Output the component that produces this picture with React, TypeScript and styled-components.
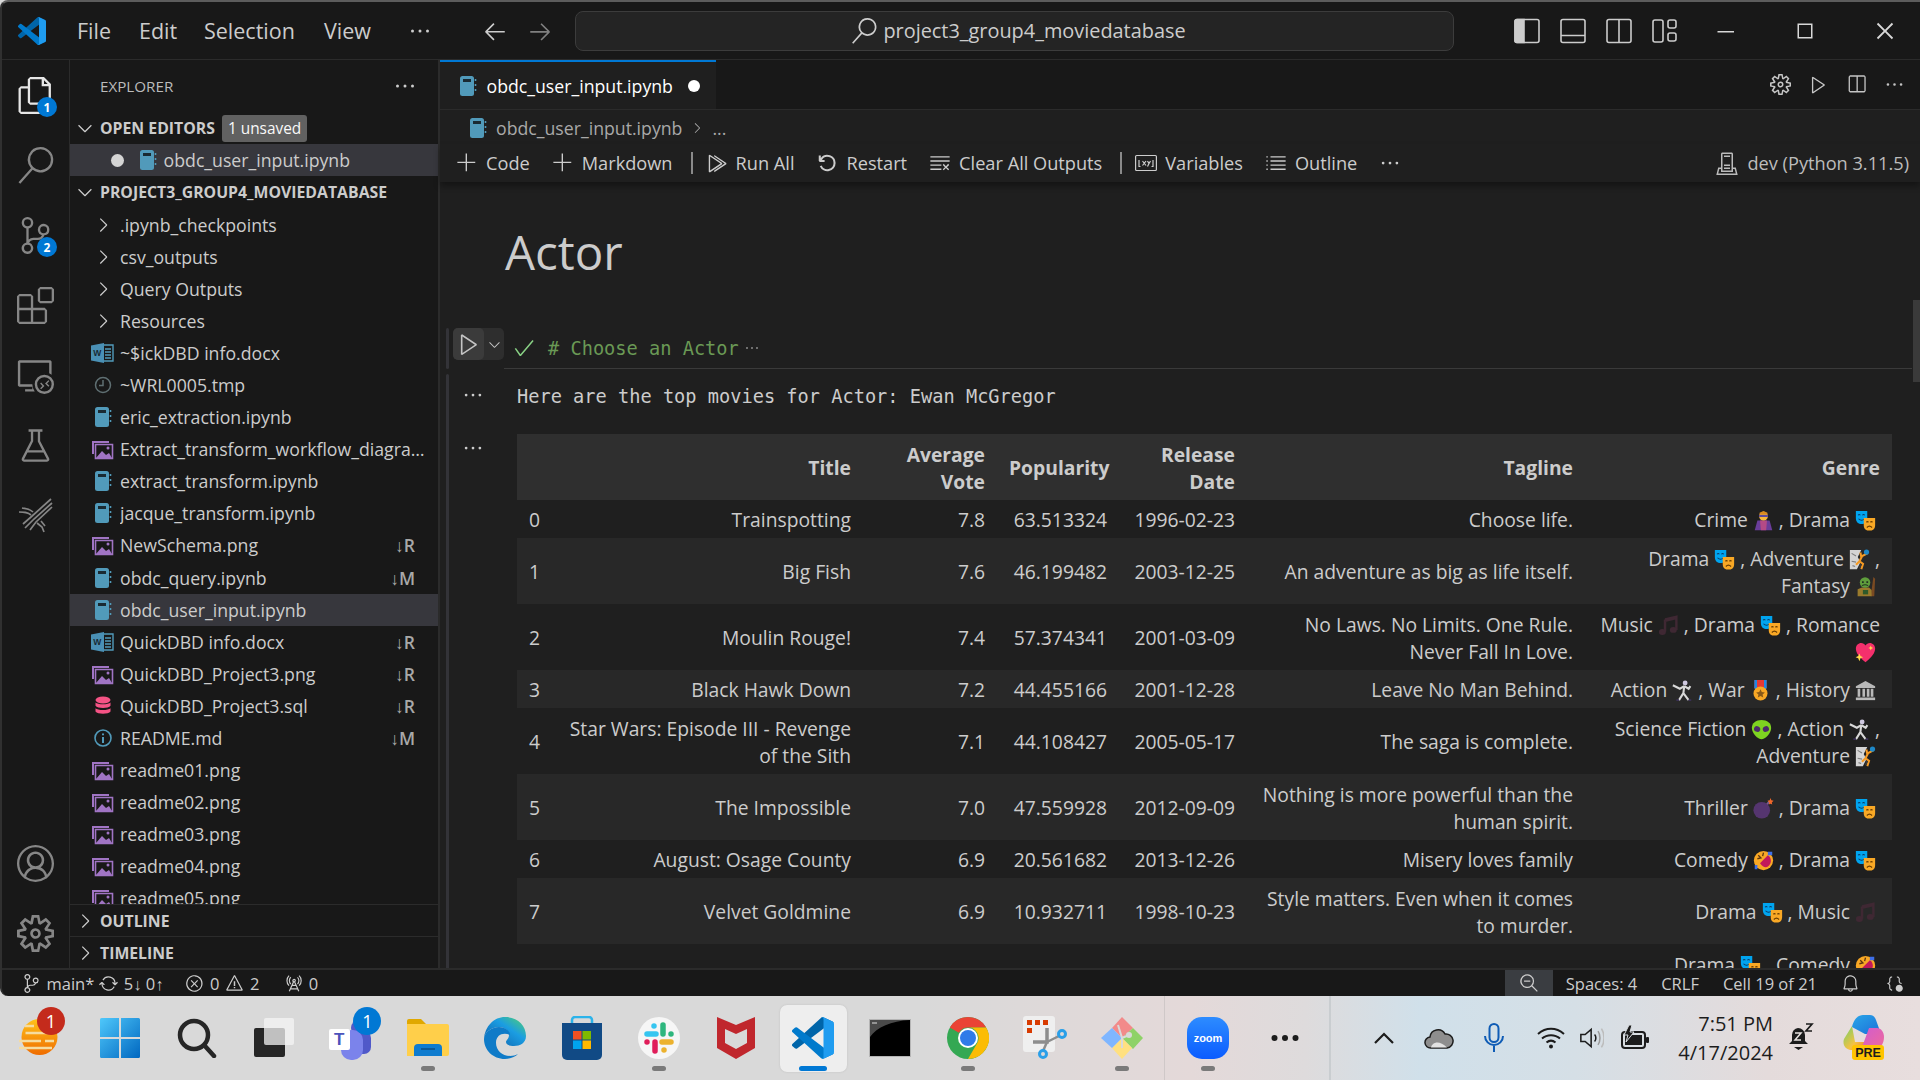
import React from 'react'
import styled, { createGlobalStyle } from 'styled-components'
import {
  VscFiles, VscSearch, VscSourceControl, VscExtensions, VscRemoteExplorer, VscBeaker, VscAccount,
  VscSettingsGear, VscEllipsis, VscChevronDown, VscChevronRight, VscAdd, VscRunAll, VscDebugRestart,
  VscClearAll, VscListUnordered, VscServerEnvironment, VscSync, VscError, VscWarning, VscRadioTower,
  VscZoomOut, VscBell, VscBracketDot, VscSplitHorizontal, VscCheck, VscArrowLeft, VscArrowRight,
  VscChromeMinimize, VscChromeMaximize, VscChromeClose, VscPlay,
} from 'react-icons/vsc'

const UI = '"Open Sans", "Noto Sans", sans-serif'
const MONO = '"DejaVu Sans Mono", "Liberation Mono", monospace'

const GlobalStyle = createGlobalStyle`
  html, body { margin: 0; padding: 0; background: #d9d9d9; }
  * { box-sizing: border-box; }
  body { font-family: ${UI}; font-size: 17.7px; color: #cccccc; }
`

const Screen = styled.div`
  width: 1920px;
  height: 1080px;
  display: flex;
  flex-direction: column;
  overflow: hidden;
`
const Window = styled.div`
  height: 996px;
  flex: none;
  display: flex;
  flex-direction: column;
  background: #181818;
  border-top: 2px solid #5c5c5c;
  border-left: 2px solid #303030;
  border-radius: 8px 0 0 8px;
  overflow: hidden;
`

/* title bar */
const TitleBar = styled.div`
  height: 58px;
  flex: none;
  display: flex;
  align-items: center;
  border-bottom: 1px solid #2b2b2b;
  position: relative;
`
const LogoSlot = styled.div`
  width: 75px;
  flex: none;
  padding-left: 16px;
  display: flex;
  align-items: center;
`
const MenuItem = styled.span<{ $w: number }>`
  width: ${p => p.$w}px;
  flex: none;
  font-size: 21.5px;
  color: #cccccc;
`
const MenuDots = styled.div`
  width: 74px;
  flex: none;
  display: flex;
  font-size: 24px;
  color: #cccccc;
  margin-left: 4px;
`
const NavIcon = styled.div<{ $dim?: boolean }>`
  width: 45px;
  flex: none;
  display: flex;
  font-size: 26px;
  color: ${p => (p.$dim ? '#808080' : '#cccccc')};
`
const CommandCenter = styled.div`
  width: 879px;
  height: 40px;
  flex: none;
  margin-left: 3px;
  border: 1px solid #3c3c3c;
  border-radius: 8px;
  background: #242424;
  display: flex;
  align-items: center;
  justify-content: center;
  gap: 6px;
  font-size: 19.9px;
  color: #cccccc;
  padding-left: 8px;
`
const LayoutIcons = styled.div`
  margin-left: 60px;
  flex: none;
  display: flex;
  gap: 20px;
  svg { display: block; }
`
const WinButtons = styled.div`
  margin-left: 7px;
  flex: none;
  display: flex;
  color: #d8d8d8;
`
const WinButton = styled.div`
  width: 80px;
  flex: none;
  display: flex;
  justify-content: center;
  font-size: 24px;
`

/* workbench */
const Workbench = styled.div`
  flex: 1;
  min-height: 0;
  display: flex;
`
const ActivityBar = styled.div`
  width: 68px;
  flex: none;
  display: flex;
  flex-direction: column;
  justify-content: space-between;
  border-right: 1px solid #2b2b2b;
`
const ActivityGroup = styled.div`
  display: flex;
  flex-direction: column;
`
const ActivitySlot = styled.div<{ $active?: boolean }>`
  position: relative;
  height: 70px;
  display: flex;
  align-items: center;
  justify-content: center;
  font-size: 37px;
  color: ${p => (p.$active ? '#e6e6e6' : '#868686')};
`
const CountBadge = styled.span`
  position: absolute;
  left: 35px;
  bottom: 13px;
  width: 20px;
  height: 20px;
  border-radius: 50%;
  background: #0078d4;
  color: #fff;
  font-size: 12px;
  font-weight: 700;
  display: flex;
  align-items: center;
  justify-content: center;
`

const SideBar = styled.div`
  width: 370px;
  flex: none;
  display: flex;
  flex-direction: column;
  border-right: 2px solid #2b2b2b;
`
const SideHead = styled.div`
  height: 52px;
  flex: none;
  display: flex;
  align-items: center;
  justify-content: space-between;
  padding: 0 21px 0 30px;
  font-size: 15.2px;
  color: #bbbbbb;
  svg { font-size: 24px; color: #cccccc; }
`
const SectionRow = styled.div<{ $line?: boolean }>`
  height: 32px;
  flex: none;
  display: flex;
  align-items: center;
  gap: 4px;
  padding-left: 4px;
  font-size: 15.8px;
  font-weight: 700;
  color: #cccccc;
  border-top: ${p => (p.$line ? '1px solid #2b2b2b' : 'none')};
  svg { font-size: 22px; flex: none; }
`
const Unsaved = styled.span`
  margin-left: 3px;
  height: 27px;
  padding: 0 6px;
  border-radius: 3px;
  background: #616161;
  color: #f8f8f8;
  font-size: 15.4px;
  font-weight: 400;
  display: flex;
  align-items: center;
`
const OpenEditor = styled.div`
  height: 32px;
  flex: none;
  display: flex;
  align-items: center;
  background: #37373d;
  padding-left: 41px;
`
const Dot = styled.span`
  width: 13px;
  height: 13px;
  border-radius: 50%;
  background: #d4d4d4;
  margin-right: 13px;
`
const Tree = styled.div`
  flex: 1;
  min-height: 0;
  overflow: hidden;
  padding-top: 1px;
`
const TreeRow = styled.div<{ $selected?: boolean }>`
  height: 32.05px;
  display: flex;
  align-items: center;
  padding: 0 12px 0 0;
  background: ${p => (p.$selected ? '#37373d' : 'transparent')};
`
const IconCell = styled.span`
  width: 50px;
  flex: none;
  display: flex;
  justify-content: flex-end;
  padding-right: 6px;
  font-size: 22px;
  color: #cccccc;
`
const FileName = styled.span`
  flex: 1;
  min-width: 0;
  white-space: nowrap;
  overflow: hidden;
  text-overflow: ellipsis;
  color: #cccccc;
`
const GitMark = styled.span`
  font-size: 17.5px;
  font-weight: 600;
  color: #a8a8a8;
  margin-right: 11px;
`

/* editor */
const Editor = styled.div`
  flex: 1;
  min-width: 0;
  display: flex;
  flex-direction: column;
  background: #1f1f1f;
`
const TabBar = styled.div`
  height: 50px;
  flex: none;
  display: flex;
  justify-content: space-between;
  background: #181818;
  border-bottom: 1px solid #2b2b2b;
`
const Tab = styled.div`
  width: 276px;
  display: flex;
  align-items: center;
  padding-left: 17px;
  gap: 7.5px;
  background: #1f1f1f;
  border-top: 2px solid #0078d4;
  color: #ffffff;
`
const TabDot = styled.span`
  width: 12px;
  height: 12px;
  border-radius: 50%;
  background: #ffffff;
  margin-left: 7.5px;
`
const EditorActions = styled.div`
  display: flex;
  align-items: center;
  gap: 17px;
  padding-right: 15px;
  font-size: 21px;
  color: #c5c5c5;
  svg { display: block; }
`
const Breadcrumb = styled.div`
  height: 34px;
  flex: none;
  display: flex;
  align-items: center;
  gap: 7px;
  padding: 1px 0 0 27px;
  color: #a9a9a9;
`
const NbToolbar = styled.div`
  height: 38px;
  flex: none;
  display: flex;
  align-items: center;
  padding-left: 16px;
  font-size: 18.2px;
  box-shadow: 0 4px 6px rgba(0, 0, 0, 0.35);
  position: relative;
  z-index: 1;
`
const ToolItem = styled.div`
  display: flex;
  align-items: center;
  gap: 8px;
  margin-right: 22px;
  color: #cccccc;
  svg { font-size: 22px; flex: none; }
`
const ToolDivider = styled.span`
  width: 2px;
  height: 22px;
  background: #8a8a8a;
  margin: 0 13px 0 -4px;
`
const Kernel = styled.div`
  margin-left: auto;
  display: flex;
  align-items: center;
  gap: 8px;
  padding-right: 11px;
  color: #bcbcbc;
  svg { font-size: 24px; }
`

/* notebook */
const Notebook = styled.div`
  flex: 1;
  min-height: 0;
  overflow: hidden;
  position: relative;
`
const ScrollThumb = styled.div`
  position: absolute;
  right: 0;
  top: 118px;
  width: 7px;
  height: 82px;
  background: #3a3a3a;
`
const Heading = styled.h1`
  height: 146px;
  margin: 0;
  padding: 36px 0 0 65px;
  font-size: 47.5px;
  font-weight: 400;
  line-height: 68px;
  color: #cccccc;
`
const CodeCell = styled.div`
  display: flex;
  height: 41px;
  padding-left: 6px;
`
const CellBar = styled.span`
  width: 3px;
  flex: none;
  background: #333338;
  border-radius: 2px;
`
const RunGroup = styled.div`
  width: 51px;
  height: 32px;
  margin-left: 4px;
  flex: none;
  display: flex;
  background: #2e2e2e;
  border-radius: 5px;
`
const RunMain = styled.div`
  width: 31px;
  display: flex;
  align-items: center;
  justify-content: center;
  background: #3b3b3b;
  border-radius: 5px;
  font-size: 26px;
  color: #c5c5c5;
`
const RunMore = styled.div`
  flex: 1;
  display: flex;
  align-items: center;
  justify-content: center;
  font-size: 17px;
  color: #c5c5c5;
`
const CodeLine = styled.div`
  flex: 1;
  display: flex;
  align-items: center;
  border-bottom: 1px solid #3a3a3a;
  margin-right: 8px;
  padding: 0 0 0 8px;
  svg { font-size: 24px; color: #89d185; flex: none; }
`
const Comment = styled.span`
  font-family: ${MONO};
  font-size: 18.65px;
  color: #6a9955;
  margin-left: 12px;
`
const Folded = styled.span`
  margin-left: 5px;
  color: #8a8a8a;
  display: flex;
  svg { font-size: 16px; color: #8a8a8a; }
`
const OutputCell = styled.div`
  display: flex;
  margin-top: 5px;
  padding-left: 6px;
  height: 620px;
`
const OutputColumn = styled.div`
  flex: 1;
  min-width: 0;
`
const OutputRow = styled.div`
  display: flex;
`
const Gutter = styled.div<{ $top: number }>`
  width: 68px;
  flex: none;
  padding: ${p => p.$top}px 0 0 13px;
  font-size: 22px;
  color: #cccccc;
  svg { display: block; }
`
const StreamText = styled.div`
  font-family: ${MONO};
  font-size: 18.65px;
  line-height: 28px;
  color: #cccccc;
  padding-top: 9px;
  margin-bottom: 23px;
`
const Table = styled.table`
  width: 1375px;
  table-layout: fixed;
  border-collapse: collapse;
  text-align: right;
  font-size: 19.3px;
  line-height: 27px;
  th { background: #2f2f2f; font-weight: 700; height: 66px; padding: 1px 12px 0; color: #cccccc; }
  td { padding: 1px 12px 0; color: #cccccc; white-space: nowrap; }
  svg { vertical-align: -4px; }
`
const BodyRow = styled.tr<{ $tall: boolean; $odd: boolean }>`
  height: ${p => (p.$tall ? 66 : 38)}px;
  background: ${p => (p.$odd ? '#282828' : 'transparent')};
`
const IndexCell = styled.td`
  text-align: left;
`
const LineEnd = styled.span`
  display: inline-block;
  width: 4px;
`

/* status bar */
const StatusBar = styled.div`
  height: 28px;
  flex: none;
  display: flex;
  align-items: center;
  padding: 0 16px 0 20px;
  border-top: 2px solid #2b2b2b;
  font-size: 16.5px;
  color: #cccccc;
  white-space: nowrap;
`
const StatusItem = styled.div<{ $left?: number }>`
  display: flex;
  align-items: center;
  gap: 5.5px;
  height: 100%;
  flex: none;
  margin-left: ${p => p.$left ?? 0}px;
  svg { font-size: 19px; flex: none; }
`
const ZoomBox = styled.div`
  margin-left: auto;
  width: 48px;
  height: 100%;
  flex: none;
  background: #3a3d41;
  display: flex;
  align-items: center;
  justify-content: center;
  font-size: 20px;
`

/* task bar */
const TaskBar = styled.div`
  height: 84px;
  flex: none;
  display: flex;
  background: linear-gradient(90deg, #d9d9d9 0, #d9d9d9 48%, #e4d9d9 62%, #dedbdc 68%, #d0e0ea 74%, #d5dfe6 82%, #e4dbdb 92%, #e8dede 100%);
`
const TaskSlot = styled.div<{ $w?: number; $active?: boolean }>`
  position: relative;
  width: ${p => p.$w ?? 77.1}px;
  flex: none;
  display: flex;
  align-items: center;
  justify-content: center;
  height: 84px;
  svg { display: block; position: relative; }
  &::before {
    content: ${p => (p.$active ? '""' : 'none')};
    position: absolute;
    left: 5px;
    right: 5px;
    top: 9px;
    height: 67px;
    border-radius: 7px;
    background: #eeeeee;
    box-shadow: 0 0 2px #bdbdbd;
  }
`
const RunPill = styled.span<{ $active?: boolean }>`
  position: absolute;
  top: 70px;
  left: 50%;
  transform: translateX(-50%);
  width: ${p => (p.$active ? 28 : 14)}px;
  height: 5px;
  border-radius: 3px;
  background: ${p => (p.$active ? '#0078d4' : '#7a7a7a')};
`
const TaskBadge = styled.span<{ $blue?: boolean; $right: number }>`
  position: absolute;
  top: 11px;
  right: ${p => p.$right}px;
  width: 28px;
  height: 28px;
  border-radius: 50%;
  background: ${p => (p.$blue ? '#0078d4' : '#c42b1c')};
  color: #fff;
  font-size: 18px;
  display: flex;
  align-items: center;
  justify-content: center;
`
const TaskSeparator = styled.span`
  width: 1px;
  flex: none;
  margin: 0 4px 0 4px;
  background: #cfc8c8;
`
const Tray = styled.div`
  margin-left: auto;
  width: 591px;
  flex: none;
  display: flex;
  border-left: 2px solid #c9cdd0;
  padding-left: 25px;
`
const Clock = styled.div`
  width: 114px;
  flex: none;
  display: flex;
  flex-direction: column;
  justify-content: center;
  align-items: flex-end;
  padding-right: 7px;
  font-size: 20px;
  line-height: 29px;
  color: #1c1c1c;
  white-space: nowrap;
`

/* small drawn file icons */
const NotebookIcon = () => (
  <svg width="22" height="22" viewBox="0 0 22 22">
    <rect x="3" y="1" width="14" height="20" rx="2.5" fill="#519aba" />
    <rect x="6" y="4" width="8" height="3" fill="#1a2a32" />
    <path d="M18.5 4v2M18.5 9v2M18.5 14v2" stroke="#519aba" strokeWidth="1.6" />
  </svg>
)
const ImageIcon = () => (
  <svg width="24" height="22" viewBox="0 0 24 22">
    <path d="M2 3h17v2H4v11H2Z" fill="#a074c4" />
    <path d="M5.500 6.500h17v14h-17Z" fill="#181818" stroke="#a074c4" strokeWidth="1.600" />
    <path d="M6 20l6-7 4 4 3-2 3 5Z" fill="#a074c4" />
    <circle cx="18" cy="10" r="1.500" fill="#a074c4" />
  </svg>
)
const WordIcon = () => (
  <svg width="24" height="22" viewBox="0 0 24 22">
    <path d="M12 3h11v16H12Z" fill="#181818" stroke="#519aba" strokeWidth="1.400" />
    <path d="M15 7h6M15 10h6M15 13h6M15 16h6" stroke="#519aba" strokeWidth="1.400" />
    <path d="M1 3.500 14 1v20L1 18.500Z" fill="#4a90b5" />
    <text x="3.200" y="14" fontSize="8.500" fontWeight="700" fontFamily="Liberation Sans" fill="#182a33">W</text>
  </svg>
)
const ClockIcon = () => (
  <svg width="22" height="22" viewBox="0 0 22 22" fill="none" stroke="#5f6f72" strokeWidth="1.500">
    <circle cx="11" cy="11" r="7.500" />
    <path d="M11 6v5.500H7" />
  </svg>
)
const DbIcon = () => (
  <svg width="22" height="22" viewBox="0 0 22 22" fill="#f55385">
    <ellipse cx="11" cy="5" rx="7.500" ry="3.500" />
    <path d="M3.500 7.500c2 2.400 13 2.400 15 0v3.300c-2 3-13 3-15 0ZM3.500 13.200c2 2.400 13 2.400 15 0v3.300c-2 3-13 3-15 0Z" />
  </svg>
)
const InfoIcon = () => (
  <svg width="22" height="22" viewBox="0 0 22 22" fill="none" stroke="#519aba" strokeWidth="1.600">
    <circle cx="11" cy="11" r="8" />
    <path d="M11 10v6M11 6.500v1.800" strokeWidth="2" />
  </svg>
)
const fileIcons = {
  nb: NotebookIcon, img: ImageIcon, word: WordIcon, tmp: ClockIcon, sql: DbIcon, info: InfoIcon,
}

const WaveIcon = () => (
  <svg width="37" height="37" viewBox="0 0 37 37" fill="none" stroke="#868686" strokeWidth="1.700">
    <path d="M34 2 14 20l-8 7" />
    <path d="M35 6 17 22 8 31" />
    <path d="M35 10 19 25l-6 8" />
    <path d="M2 15c5 0 8 0 12 3M5 11c5 1 8 1 11 4M20 26l5 4 2 5M24 24l4 5" />
  </svg>
)

/* layout toggles in the title bar */
const LayoutLeft = () => (
  <svg width="26" height="26" viewBox="0 0 26 26" fill="none" stroke="#cccccc" strokeWidth="1.600">
    <rect x="1" y="1.500" width="24" height="23" rx="2" />
    <path d="M1 3.500a2 2 0 0 1 2-2h7v23H3a2 2 0 0 1-2-2Z" fill="#cccccc" />
  </svg>
)
const LayoutPanel = () => (
  <svg width="26" height="26" viewBox="0 0 26 26" fill="none" stroke="#cccccc" strokeWidth="1.600">
    <rect x="1" y="1.500" width="24" height="23" rx="2" />
    <path d="M1 17.500h24" />
  </svg>
)
const LayoutRight = () => (
  <svg width="26" height="26" viewBox="0 0 26 26" fill="none" stroke="#cccccc" strokeWidth="1.600">
    <rect x="1" y="1.500" width="24" height="23" rx="2" />
    <path d="M13 1.500v23" />
  </svg>
)
const LayoutCustom = () => (
  <svg width="26" height="26" viewBox="0 0 26 26" fill="none" stroke="#cccccc" strokeWidth="1.600">
    <rect x="1" y="2" width="10" height="22" rx="2" />
    <rect x="16" y="2" width="8" height="8" rx="2" />
    <rect x="16" y="15" width="8" height="8" rx="2" />
  </svg>
)
const VariablesIcon = () => (
  <svg width="22" height="22" viewBox="0 0 22 22" fill="none" stroke="#cccccc" strokeWidth="1.200">
    <rect x="0.600" y="3.500" width="20.800" height="15" rx="1" />
    <path d="M4 8v6.500h1.500M18 8v6.500h-1.500M7.500 9l3.500 4.500M11 9l-3.500 4.500M12.500 9l1.500 2.500L15.500 9M14 11.500l-1.500 3" />
  </svg>
)
const VsCodeLogo = ({ size }: { size: number }) => (
  <svg width={size} height={size} viewBox="0 0 100 100">
    <path fill="#0065a9" d="M96.500 10.800 75.900.9a6.200 6.200 0 0 0-7.100 1.200L1.400 63.500a4.200 4.200 0 0 0 0 6.200l5.500 5a4.200 4.200 0 0 0 5.300.2L93.400 13.400c2.700-2 6.600-.1 6.600 3.300v-.2a6.200 6.200 0 0 0-3.500-5.700Z" />
    <path fill="#007acc" d="M96.500 89.200 75.900 99.100a6.200 6.200 0 0 1-7.100-1.200L1.400 36.500a4.200 4.200 0 0 1 0-6.200l5.500-5a4.200 4.200 0 0 1 5.300-.2l81.200 61.500c2.700 2 6.600.1 6.600-3.300v.2a6.200 6.200 0 0 1-3.500 5.700Z" />
    <path fill="#1f9cf0" d="M75.900 99.100a6.200 6.200 0 0 1-7.100-1.200c2.300 2.300 6.200.7 6.200-2.600V4.700c0-3.300-3.900-4.900-6.200-2.600a6.200 6.200 0 0 1 7.100-1.200l20.600 9.900a6.200 6.200 0 0 1 3.500 5.600v67.200a6.200 6.200 0 0 1-3.500 5.600Z" />
  </svg>
)

/* genre emoji */
const Emoji = ({ children }: { children: React.ReactNode }) => (
  <svg width="21" height="21" viewBox="0 0 24 24">{children}</svg>
)
const Masks = () => (
  <Emoji>
    <path d="M1 1h13v8c0 5-3 7-6.500 7S1 14 1 9Z" fill="#00a4ef" />
    <path d="M3.500 6q1.300-1.500 2.600 0M8.500 6q1.300-1.500 2.600 0M4 10q3.500 3.500 7 0" stroke="#0a3a66" strokeWidth="1.200" fill="none" />
    <path d="M10 9h13v8c0 5-3 6.500-6.500 6.500S10 22 10 17Z" fill="#f9a825" />
    <path d="M13 14q1.200-1.200 2.400 0M17.600 14q1.200-1.200 2.400 0M13.500 20q3-3 6 0" stroke="#6b3d00" strokeWidth="1.300" fill="none" />
  </Emoji>
)
const Villain = () => (
  <Emoji>
    <path d="M2 23 5 12h14l3 11Z" fill="#6a3d9a" />
    <path d="M8 12h8l-1 11H9Z" fill="#b44a86" />
    <circle cx="12" cy="7" r="5" fill="#f7b73a" />
    <path d="M7 5.500h10v2.500H7Z" fill="#5c4a9c" />
    <path d="M7.500 3 12 1l4.500 2v2h-9Z" fill="#d98a1f" />
  </Emoji>
)
const Climber = () => (
  <Emoji>
    <path d="M1 1h13l-4 8 3 6-4 8H1Z" fill="#d4d4d4" />
    <path d="M3 5l5 3M3 14l5 1M4 19l3 1" stroke="#7f7f7f" strokeWidth="1.300" />
    <path d="M21 5l-6 3-3 6 4 3-2 6M14 9l-1-5M12 14l-4 4" stroke="#f59a23" strokeWidth="2.400" fill="none" />
    <path d="M14 17l-2 5" stroke="#3a3a3a" strokeWidth="2" />
    <circle cx="20" cy="3.500" r="3" fill="#1e88c7" />
  </Emoji>
)
const Troll = () => (
  <Emoji>
    <path d="M18 23 21 1l2 2-1 20Z" fill="#7a4a22" />
    <path d="M3 23V15l5-2h8l3 3v7Z" fill="#9a7b2c" />
    <rect x="9" y="16" width="6" height="5" fill="#2f5a2a" />
    <circle cx="11.500" cy="7.500" r="6" fill="#5f9e3c" />
    <path d="M8 7h2M13 7h2" stroke="#232" strokeWidth="1.800" />
    <path d="M8 11q3.500-2 7 0" stroke="#232" strokeWidth="1.300" fill="none" />
  </Emoji>
)
const Notes = () => (
  <Emoji>
    <path d="M8 5 21 2v15M8 5v14M8 6.500l13-3" stroke="#3f2833" strokeWidth="2.800" fill="none" />
    <ellipse cx="5" cy="19.500" rx="4" ry="3.400" fill="#3f2833" />
    <ellipse cx="17.500" cy="17" rx="4" ry="3.400" fill="#3f2833" />
  </Emoji>
)
const Heart = () => (
  <Emoji>
    <path d="M12 23C4 17 1 12 1 7.500 1 3.500 4 1 7 1c2 0 4 1 5 3 1-2 3-3 5-3 3 0 6 2.500 6 6.500C23 12 20 17 12 23Z" fill="#f4306c" />
    <path d="M5 13l1.300 3 3 1.300-3 1.300L5 22l-1.300-3.400-3-1.300 3-1.300ZM18 4l.8 2 2 .8-2 .8-.8 2-.8-2-2-.8 2-.8Z" fill="#ffd84d" />
  </Emoji>
)
const Fencer = () => (
  <Emoji>
    <circle cx="15" cy="3.500" r="2.800" fill="#cfc9e0" />
    <path d="M14 7l-5 3-8-4M14 7l5 3 2-3M14 7l-1 8-5 8M13 15l6 8" stroke="#d8d8d8" strokeWidth="2.400" fill="none" />
    <path d="M8 23h-3M19 23h3" stroke="#3a2f55" strokeWidth="2" />
  </Emoji>
)
const Medal = () => (
  <Emoji>
    <path d="M5 0h14v9l-7 4-7-4Z" fill="#e53935" />
    <path d="M5 0h3v10H5ZM16 0h3v10h-3Z" fill="#1e88e5" />
    <circle cx="12" cy="15.500" r="8" fill="#f9a825" />
    <path d="M12 10.500l1.500 3.300 3.500.4-2.600 2.300.7 3.500-3.100-1.800-3.100 1.800.7-3.500L7 14.200l3.500-.4Z" fill="#8a5a18" />
  </Emoji>
)
const Temple = () => (
  <Emoji>
    <path d="M12 1 23 7v2H1V7Z" fill="#b8b8b8" />
    <path d="M3 10h3v9H3ZM8.500 10h3v9h-3ZM13.500 10h3v9h-3ZM18 10h3v9h-3Z" fill="#b8b8b8" />
    <path d="M1 20h22v3H1Z" fill="#b8b8b8" />
  </Emoji>
)
const Alien = () => (
  <Emoji>
    <path d="M12 1c6.500 0 11 3.500 11 9 0 7-7 13-11 13S1 17 1 10c0-5.500 4.500-9 11-9Z" fill="#7ed321" />
    <ellipse cx="7" cy="11.500" rx="3.600" ry="3.200" fill="#4a2a6a" transform="rotate(25 7 11.500)" />
    <ellipse cx="17" cy="11.500" rx="3.600" ry="3.200" fill="#4a2a6a" transform="rotate(-25 17 11.500)" />
  </Emoji>
)
const Bomb = () => (
  <Emoji>
    <circle cx="10" cy="14" r="9.500" fill="#55356f" />
    <path d="M16 7l3-3" stroke="#7a5c8f" strokeWidth="2.400" />
    <path d="M20 0l1 2.500L23.500 3 21.500 5l.5 2.500L20 6.500 18 7.500l.5-2.500L16.500 3l2.500-.5Z" fill="#f0682a" />
  </Emoji>
)
const Rofl = () => (
  <Emoji>
    <circle cx="12" cy="12" r="11" fill="#f9a825" />
    <path d="M8 15 17 6c3 2 4.500 6 2.500 10s-7 6-11.500-1Z" fill="#c2185b" />
    <path d="M17 2h5v4h-5ZM2 17h3v5H2Z" fill="#3f6fe8" />
    <path d="M6 6l3 3-4 1M12 3l-1 4" stroke="#5a3410" strokeWidth="1.500" fill="none" />
  </Emoji>
)

const g = (...parts: React.ReactNode[]) => parts.map((part, i) => <React.Fragment key={i}>{part}</React.Fragment>)

const movies = [
  { title: 'Trainspotting', vote: '7.8', pop: '63.513324', date: '1996-02-23', tag: 'Choose life.', genre: g('Crime ', <Villain />, ' , Drama ', <Masks />, <LineEnd />) },
  { title: 'Big Fish', vote: '7.6', pop: '46.199482', date: '2003-12-25', tag: 'An adventure as big as life itself.', genre: g('Drama ', <Masks />, ' , Adventure ', <Climber />, ' ,', <br />, 'Fantasy ', <Troll />, <LineEnd />), tall: true },
  { title: 'Moulin Rouge!', vote: '7.4', pop: '57.374341', date: '2001-03-09', tag: g('No Laws. No Limits. One Rule.', <br />, 'Never Fall In Love.'), genre: g('Music ', <Notes />, ' , Drama ', <Masks />, ' , Romance', <br />, <Heart />, <LineEnd />), tall: true },
  { title: 'Black Hawk Down', vote: '7.2', pop: '44.455166', date: '2001-12-28', tag: 'Leave No Man Behind.', genre: g('Action ', <Fencer />, ' , War ', <Medal />, ' , History ', <Temple />, <LineEnd />) },
  { title: g('Star Wars: Episode III - Revenge', <br />, 'of the Sith'), vote: '7.1', pop: '44.108427', date: '2005-05-17', tag: 'The saga is complete.', genre: g('Science Fiction ', <Alien />, ' , Action ', <Fencer />, ' ,', <br />, 'Adventure ', <Climber />, <LineEnd />), tall: true },
  { title: 'The Impossible', vote: '7.0', pop: '47.559928', date: '2012-09-09', tag: g('Nothing is more powerful than the', <br />, 'human spirit.'), genre: g('Thriller ', <Bomb />, ' , Drama ', <Masks />, <LineEnd />), tall: true },
  { title: 'August: Osage County', vote: '6.9', pop: '20.561682', date: '2013-12-26', tag: 'Misery loves family', genre: g('Comedy ', <Rofl />, ' , Drama ', <Masks />, <LineEnd />) },
  { title: 'Velvet Goldmine', vote: '6.9', pop: '10.932711', date: '1998-10-23', tag: g('Style matters. Even when it comes', <br />, 'to murder.'), genre: g('Drama ', <Masks />, ' , Music ', <Notes />, <LineEnd />), tall: true },
  { title: '', vote: '', pop: '', date: '', tag: '', genre: g('Drama ', <Masks />, ' , Comedy ', <Rofl />, <LineEnd />, <br />, 'Romance'), tall: true },
]

const files: { name: string; kind: keyof typeof fileIcons; mark?: string; selected?: boolean }[] = [
  { name: '~$ickDBD info.docx', kind: 'word' },
  { name: '~WRL0005.tmp', kind: 'tmp' },
  { name: 'eric_extraction.ipynb', kind: 'nb' },
  { name: 'Extract_transform_workflow_diagram.png', kind: 'img' },
  { name: 'extract_transform.ipynb', kind: 'nb' },
  { name: 'jacque_transform.ipynb', kind: 'nb' },
  { name: 'NewSchema.png', kind: 'img', mark: '↓R' },
  { name: 'obdc_query.ipynb', kind: 'nb', mark: '↓M' },
  { name: 'obdc_user_input.ipynb', kind: 'nb', selected: true },
  { name: 'QuickDBD info.docx', kind: 'word', mark: '↓R' },
  { name: 'QuickDBD_Project3.png', kind: 'img', mark: '↓R' },
  { name: 'QuickDBD_Project3.sql', kind: 'sql', mark: '↓R' },
  { name: 'README.md', kind: 'info', mark: '↓M' },
  { name: 'readme01.png', kind: 'img' },
  { name: 'readme02.png', kind: 'img' },
  { name: 'readme03.png', kind: 'img' },
  { name: 'readme04.png', kind: 'img' },
  { name: 'readme05.png', kind: 'img' },
]

const folders = ['.ipynb_checkpoints', 'csv_outputs', 'Query Outputs', 'Resources']

/* task bar art */
const WeatherArt = () => (
  <svg width="44" height="40" viewBox="0 0 44 40">
    <defs>
      <linearGradient id="sun" x1="0" y1="0" x2="0" y2="1">
        <stop offset="0" stopColor="#ffc21a" />
        <stop offset="1" stopColor="#ef6c00" />
      </linearGradient>
    </defs>
    <circle cx="20.500" cy="19" r="18" fill="url(#sun)" />
    <path d="M6 8h9M6.500 15H33M0 23h22M26 23h9M0 30h33" stroke="#f5dca0" strokeWidth="2.600" />
  </svg>
)
const StartArt = () => (
  <svg width="40" height="40" viewBox="0 0 40 40">
    <defs>
      <linearGradient id="win" x1="0" y1="0" x2="1" y2="1">
        <stop offset="0" stopColor="#4fc8fb" />
        <stop offset="1" stopColor="#0067c0" />
      </linearGradient>
    </defs>
    <path d="M0 1.500A1.500 1.500 0 0 1 1.500 0H19v19H0ZM21 0h17.500A1.500 1.500 0 0 1 40 1.500V19H21ZM0 21h19v19H1.500A1.500 1.500 0 0 1 0 38.500ZM21 21h19v17.500a1.500 1.500 0 0 1-1.500 1.500H21Z" fill="url(#win)" />
  </svg>
)
const SearchArt = () => (
  <svg width="40" height="40" viewBox="0 0 40 40" fill="none" stroke="#262626" strokeWidth="4.500" strokeLinecap="round">
    <circle cx="17" cy="17" r="14" />
    <path d="M27.500 27.500 37 38" />
  </svg>
)
const TaskViewArt = () => (
  <svg width="42" height="42" viewBox="0 0 42 42">
    <rect x="1" y="11" width="31" height="29" rx="2" fill="#262626" />
    <rect x="11" y="1" width="30" height="27" rx="2" fill="#f4f4f4" opacity="0.75" />
  </svg>
)
const TeamsArt = () => (
  <svg width="44" height="44" viewBox="0 0 44 44">
    <circle cx="30" cy="12" r="8" fill="#5059c9" />
    <rect x="26" y="15" width="16" height="23" rx="7" fill="#5059c9" />
    <rect x="12" y="14" width="22" height="30" rx="10" fill="#7b83eb" />
    <rect x="0" y="13" width="21" height="21" rx="2" fill="#ffffff" />
    <text x="5" y="29" fontSize="17" fontWeight="700" fontFamily="Liberation Sans" fill="#4b53bc">T</text>
  </svg>
)
const ExplorerArt = () => (
  <svg width="42" height="40" viewBox="0 0 42 40">
    <path d="M0 3a2 2 0 0 1 2-2h12l5 5v6H0Z" fill="#e0a800" />
    <path d="M0 6h40a2 2 0 0 1 2 2v28a2 2 0 0 1-2 2H0Z" fill="#ffcf4a" />
    <path d="M7 38V30a4 4 0 0 1 4-4h20a4 4 0 0 1 4 4v8Z" fill="#0f7ccf" />
    <path d="M14 31h14" stroke="#0b5a99" strokeWidth="2" />
  </svg>
)
const EdgeArt = () => (
  <svg width="42" height="42" viewBox="0 0 42 42">
    <defs>
      <linearGradient id="edge" x1="0" y1="1" x2="1" y2="0">
        <stop offset="0" stopColor="#0c59a4" />
        <stop offset="0.6" stopColor="#1b9de2" />
        <stop offset="1" stopColor="#54d36b" />
      </linearGradient>
    </defs>
    <path d="M21 0c12 0 21 8 21 19 0 7-6 10-12 10-4 0-8-1-8-4 0-2 3-3 3-7 0-5-5-8-10-8C8 10 0 15 0 22 1 9 10 0 21 0Z" fill="url(#edge)" />
    <path d="M0 22c0-7 8-12 15-12 5 0 11 3 11 8-7-3-14 0-14 8 0 7 6 13 14 13 3 0 6-1 8-2-3 3-8 5-13 5C9 42 0 33 0 22Z" fill="#0f7bc8" />
  </svg>
)
const StoreArt = () => (
  <svg width="40" height="44" viewBox="0 0 40 44">
    <path d="M10 8V4a3 3 0 0 1 3-3h14a3 3 0 0 1 3 3v4" fill="none" stroke="#2bb3ea" strokeWidth="2.500" />
    <path d="M0 7h40v32a5 5 0 0 1-5 5H5a5 5 0 0 1-5-5Z" fill="#114a85" />
    <rect x="11" y="15" width="8.500" height="8.500" fill="#f25022" />
    <rect x="20.500" y="15" width="8.500" height="8.500" fill="#7fba00" />
    <rect x="11" y="24.500" width="8.500" height="8.500" fill="#00a4ef" />
    <rect x="20.500" y="24.500" width="8.500" height="8.500" fill="#ffb900" />
  </svg>
)
const SlackArt = () => (
  <svg width="42" height="42" viewBox="0 0 42 42">
    <circle cx="21" cy="21" r="21" fill="#f6f6f6" />
    <g strokeWidth="5.500" strokeLinecap="round" fill="none">
      <path d="M9 17h9M16 9v0" stroke="#36c5f0" />
      <path d="M25 8v9M33 17h0" stroke="#2eb67d" />
      <path d="M24 25h9M26 33h0" stroke="#ecb22e" />
      <path d="M17 25v9M9 25h0" stroke="#e01e5a" />
    </g>
  </svg>
)
const McAfeeArt = () => (
  <svg width="38" height="42" viewBox="0 0 38 42">
    <path d="M0 0 19 8 38 0v31L19 42 0 31ZM8 12v14l11 6 11-6V12l-11 5Z" fill="#c0272d" fillRule="evenodd" />
  </svg>
)
const TerminalArt = () => (
  <svg width="42" height="38" viewBox="0 0 42 38">
    <rect x="0.500" y="0.500" width="41" height="37" fill="#000" stroke="#b5b5b5" />
    <path d="M1 18C8 8 22 2 41 1V1H1Z" fill="#4a4a4a" />
    <path d="M3 4h5" stroke="#ddd" strokeWidth="1" />
  </svg>
)
const ChromeArt = () => (
  <svg width="42" height="42" viewBox="0 0 42 42">
    <circle cx="21" cy="21" r="21" fill="#34a853" />
    <path d="M21 0a21 21 0 0 1 18.200 10.500H21a10.500 10.500 0 0 0-9.100 5.250L2.800 10.500A21 21 0 0 1 21 0Z" fill="#ea4335" />
    <path d="M39.200 10.500A21 21 0 0 1 21 42l9.100-15.750A10.500 10.500 0 0 0 30.100 15.750 10.500 10.500 0 0 0 21 10.500Z" fill="#fbbc04" />
    <circle cx="21" cy="21" r="10" fill="#fff" />
    <circle cx="21" cy="21" r="8" fill="#2f7be8" />
  </svg>
)
const SnipArt = () => (
  <svg width="44" height="44" viewBox="0 0 44 44">
    <rect x="0" y="0" width="32" height="36" rx="3" fill="#efefef" />
    <path d="M4 4h5v5H4ZM12 4h5v5h-5ZM20 4h5v5h-5ZM4 12h5v5H4Z" fill="#d83b01" />
    <path d="M24 12v14H10" fill="none" stroke="#8d8d8d" strokeWidth="3.500" />
    <path d="M24 26l12-6" stroke="#8d8d8d" strokeWidth="2.500" />
    <path d="M24 26l-4 9" stroke="#8d8d8d" strokeWidth="2.500" />
    <circle cx="39" cy="18" r="3.500" fill="none" stroke="#2a9fe8" strokeWidth="3" />
    <circle cx="20" cy="38" r="3.500" fill="none" stroke="#2a9fe8" strokeWidth="3" />
  </svg>
)
const GitArt = () => (
  <svg width="42" height="42" viewBox="0 0 42 42">
    <path d="M21 0l11 11-11 10-10-10Z" fill="#f28a8a" />
    <path d="M32 11l10 10-10 11-11-11Z" fill="#8ed268" />
    <path d="M21 21l10 10-10 11-10-11Z" fill="#ffe080" />
    <path d="M11 11l10 10-10 10L0 21Z" fill="#7fb6ff" />
    <path d="M17 8l4 13v10M21 21l7-3" stroke="#d9d9d9" strokeWidth="2" fill="none" />
    <circle cx="28" cy="18" r="3" fill="#d9d9d9" />
  </svg>
)
const ZoomArt = () => (
  <svg width="42" height="42" viewBox="0 0 42 42">
    <defs>
      <linearGradient id="zm" x1="0" y1="0" x2="0" y2="1">
        <stop offset="0" stopColor="#2d8cff" />
        <stop offset="1" stopColor="#0b5cff" />
      </linearGradient>
    </defs>
    <rect width="42" height="42" rx="15" fill="url(#zm)" />
    <text x="21" y="25" textAnchor="middle" fontSize="11" fontWeight="700" fontFamily="Liberation Sans" fill="#fff">zoom</text>
  </svg>
)
const MoreArt = () => (
  <svg width="28" height="8" viewBox="0 0 28 8" fill="#1c1c1c">
    <circle cx="3.500" cy="4" r="3" />
    <circle cx="14" cy="4" r="3" />
    <circle cx="24.500" cy="4" r="3" />
  </svg>
)
const TrayChevron = () => (
  <svg width="22" height="13" viewBox="0 0 22 13" fill="none" stroke="#1c1c1c" strokeWidth="2.200"><path d="M2 11 11 2l9 9" /></svg>
)
const CloudArt = () => (
  <svg width="30" height="22" viewBox="0 0 30 22">
    <path d="M7 21A5.500 5.500 0 0 1 6 10a8 8 0 0 1 15-3 6.500 6.500 0 0 1 2 14Z" fill="#8e8e8e" stroke="#1c1c1c" strokeWidth="1.500" />
    <path d="M7 20.500c1-5 8-8 16 0Z" fill="#e2e2e2" />
  </svg>
)
const MicArt = () => (
  <svg width="22" height="30" viewBox="0 0 22 30" fill="none" stroke="#0f5cb5" strokeWidth="2">
    <rect x="6.500" y="1" width="9" height="18" rx="4.500" />
    <path d="M2 13a9 9 0 0 0 18 0M11 22v7" />
  </svg>
)
const WifiArt = () => (
  <svg width="28" height="22" viewBox="0 0 28 22" fill="none" stroke="#1c1c1c" strokeWidth="2">
    <path d="M1 7c8-7 18-7 26 0M5 11.500c5-4.500 13-4.500 18 0M9.500 15.500c3-2.500 6-2.500 9 0" />
    <circle cx="14" cy="19.500" r="2" fill="#1c1c1c" stroke="none" />
  </svg>
)
const VolumeArt = () => (
  <svg width="28" height="28" viewBox="0 0 28 28" fill="none" strokeWidth="1.800">
    <path d="M1 10h5l7-6v20l-7-6H1Z" stroke="#1c1c1c" />
    <path d="M17 10c2 2 2 6 0 8" stroke="#1c1c1c" />
    <path d="M21 6c3 4 3 12 0 16" stroke="#9b9b9b" />
    <path d="M25 3c4 6 4 16 0 22" stroke="#bdbdbd" />
  </svg>
)
const BatteryArt = () => (
  <svg width="30" height="26" viewBox="0 0 30 26">
    <rect x="2" y="7" width="23" height="16" rx="3" fill="#d9dee2" stroke="#1c1c1c" strokeWidth="2" />
    <rect x="5" y="10" width="17" height="10" fill="#1c1c1c" />
    <rect x="26" y="12" width="3" height="6" rx="1" fill="#1c1c1c" />
    <path d="M9 0 4 10h4l-2 7 8-10h-4l2-7Z" fill="#1c1c1c" stroke="#d9dee2" />
  </svg>
)
const SnoozeArt = () => (
  <svg width="26" height="30" viewBox="0 0 26 30">
    <path d="M10 5a7 7 0 0 1 7 7v6l3 3H1l3-3v-6a7 7 0 0 1 6-7Z" fill="#1c1c1c" />
    <path d="M6 24h9l-4.500 3Z" fill="#1c1c1c" />
    <path d="M7 10h6l-6 7h6" stroke="#e8e2e0" strokeWidth="1.500" fill="none" />
    <path d="M18 1h6l-6 7h6" stroke="#1c1c1c" strokeWidth="1.700" fill="none" />
  </svg>
)
const CopilotArt = () => (
  <svg width="42" height="46" viewBox="0 0 42 46">
    <defs>
      <linearGradient id="cp1" x1="0" y1="0" x2="1" y2="1">
        <stop offset="0" stopColor="#2aa6e8" />
        <stop offset="1" stopColor="#1c6fd8" />
      </linearGradient>
      <linearGradient id="cp2" x1="0" y1="0" x2="1" y2="1">
        <stop offset="0" stopColor="#6fd06a" />
        <stop offset="0.6" stopColor="#f5c242" />
        <stop offset="1" stopColor="#ec7a3a" />
      </linearGradient>
      <linearGradient id="cp3" x1="0" y1="0" x2="1" y2="1">
        <stop offset="0" stopColor="#d05cd0" />
        <stop offset="1" stopColor="#f06a9a" />
      </linearGradient>
    </defs>
    <path d="M9 12C11 3 16 0 20 0h7c3 0 5 2 6 5l5 14H22Z" fill="url(#cp1)" />
    <path d="M9 11 1 24c-2 6 2 11 7 11h12l3-8H12Z" fill="url(#cp2)" />
    <path d="M26 13h8c4 0 7 4 7 9 0 7-4 13-12 13H18l8-22Z" fill="url(#cp3)" />
    <rect x="9" y="30" width="32" height="15" rx="3" fill="#ffc400" />
    <text x="25" y="42" textAnchor="middle" fontSize="12.500" fontWeight="700" fontFamily="Liberation Sans" fill="#1c1c1c">PRE</text>
  </svg>
)

export default function App() {
  return (
    <Screen>
      <GlobalStyle />
      <Window>
        <TitleBar>
          <LogoSlot><VsCodeLogo size={28} /></LogoSlot>
          <MenuItem $w={62}>File</MenuItem>
          <MenuItem $w={65}>Edit</MenuItem>
          <MenuItem $w={120}>Selection</MenuItem>
          <MenuItem $w={80}>View</MenuItem>
          <MenuDots><VscEllipsis /></MenuDots>
          <NavIcon><VscArrowLeft /></NavIcon>
          <NavIcon $dim><VscArrowRight /></NavIcon>
          <CommandCenter><VscSearch size={26} />project3_group4_moviedatabase</CommandCenter>
          <LayoutIcons>
            <LayoutLeft />
            <LayoutPanel />
            <LayoutRight />
            <LayoutCustom />
          </LayoutIcons>
          <WinButtons>
            <WinButton><VscChromeMinimize /></WinButton>
            <WinButton><VscChromeMaximize /></WinButton>
            <WinButton><VscChromeClose /></WinButton>
          </WinButtons>
        </TitleBar>

        <Workbench>
          <ActivityBar>
            <ActivityGroup>
              <ActivitySlot $active><VscFiles /><CountBadge>1</CountBadge></ActivitySlot>
              <ActivitySlot><VscSearch /></ActivitySlot>
              <ActivitySlot><VscSourceControl /><CountBadge>2</CountBadge></ActivitySlot>
              <ActivitySlot><VscExtensions /></ActivitySlot>
              <ActivitySlot><VscRemoteExplorer /></ActivitySlot>
              <ActivitySlot><VscBeaker /></ActivitySlot>
              <ActivitySlot><WaveIcon /></ActivitySlot>
            </ActivityGroup>
            <ActivityGroup>
              <ActivitySlot><VscAccount /></ActivitySlot>
              <ActivitySlot><VscSettingsGear /></ActivitySlot>
            </ActivityGroup>
          </ActivityBar>

          <SideBar>
            <SideHead>EXPLORER<VscEllipsis /></SideHead>
            <SectionRow><VscChevronDown />OPEN EDITORS<Unsaved>1 unsaved</Unsaved></SectionRow>
            <OpenEditor>
              <Dot />
              <NotebookIcon />
              <FileName>&nbsp;obdc_user_input.ipynb</FileName>
            </OpenEditor>
            <SectionRow><VscChevronDown />PROJECT3_GROUP4_MOVIEDATABASE</SectionRow>
            <Tree>
              {folders.map(name => (
                <TreeRow key={name}>
                  <IconCell><VscChevronRight /></IconCell>
                  <FileName>{name}</FileName>
                </TreeRow>
              ))}
              {files.map(file => {
                const Icon = fileIcons[file.kind]
                return (
                  <TreeRow key={file.name} $selected={file.selected}>
                    <IconCell><Icon /></IconCell>
                    <FileName>{file.name}</FileName>
                    {file.mark && <GitMark>{file.mark}</GitMark>}
                  </TreeRow>
                )
              })}
            </Tree>
            <SectionRow $line><VscChevronRight />OUTLINE</SectionRow>
            <SectionRow $line><VscChevronRight />TIMELINE</SectionRow>
          </SideBar>

          <Editor>
            <TabBar>
              <Tab>
                <NotebookIcon />
                obdc_user_input.ipynb
                <TabDot />
              </Tab>
              <EditorActions>
                <VscSettingsGear />
                <VscPlay />
                <VscSplitHorizontal />
                <VscEllipsis />
              </EditorActions>
            </TabBar>
            <Breadcrumb>
              <NotebookIcon />
              obdc_user_input.ipynb
              <VscChevronRight size={16} />
              ...
            </Breadcrumb>
            <NbToolbar>
              <ToolItem><VscAdd />Code</ToolItem>
              <ToolItem><VscAdd />Markdown</ToolItem>
              <ToolDivider />
              <ToolItem><VscRunAll />Run All</ToolItem>
              <ToolItem><VscDebugRestart />Restart</ToolItem>
              <ToolItem><VscClearAll />Clear All Outputs</ToolItem>
              <ToolDivider />
              <ToolItem><VariablesIcon />Variables</ToolItem>
              <ToolItem><VscListUnordered />Outline</ToolItem>
              <ToolItem><VscEllipsis /></ToolItem>
              <Kernel><VscServerEnvironment />dev (Python 3.11.5)</Kernel>
            </NbToolbar>

            <Notebook>
              <ScrollThumb />
              <Heading>Actor</Heading>
              <CodeCell>
                <CellBar />
                <RunGroup>
                  <RunMain><VscPlay /></RunMain>
                  <RunMore><VscChevronDown /></RunMore>
                </RunGroup>
                <CodeLine>
                  <VscCheck />
                  <Comment># Choose an Actor</Comment>
                  <Folded><VscEllipsis /></Folded>
                </CodeLine>
              </CodeCell>
              <OutputCell>
                <CellBar />
                <OutputColumn>
                  <OutputRow>
                    <Gutter $top={10}><VscEllipsis /></Gutter>
                    <StreamText>Here are the top movies for Actor: Ewan McGregor</StreamText>
                  </OutputRow>
                  <OutputRow>
                    <Gutter $top={3}><VscEllipsis /></Gutter>
                    <Table>
                      <colgroup>
                        <col width="38" />
                        <col width="308" />
                        <col width="134" />
                        <col width="122" />
                        <col width="128" />
                        <col width="338" />
                        <col width="307" />
                      </colgroup>
                      <thead>
                        <tr>
                          <th />
                          <th>Title</th>
                          <th>Average<br />Vote</th>
                          <th>Popularity</th>
                          <th>Release<br />Date</th>
                          <th>Tagline</th>
                          <th>Genre</th>
                        </tr>
                      </thead>
                      <tbody>
                        {movies.map((movie, i) => (
                          <BodyRow key={i} $tall={!!movie.tall} $odd={i % 2 === 1}>
                            <IndexCell>{movie.title ? i : ''}</IndexCell>
                            <td>{movie.title}</td>
                            <td>{movie.vote}</td>
                            <td>{movie.pop}</td>
                            <td>{movie.date}</td>
                            <td>{movie.tag}</td>
                            <td>{movie.genre}</td>
                          </BodyRow>
                        ))}
                      </tbody>
                    </Table>
                  </OutputRow>
                </OutputColumn>
              </OutputCell>
            </Notebook>
          </Editor>
        </Workbench>

        <StatusBar>
          <StatusItem><VscSourceControl />main*</StatusItem>
          <StatusItem $left={5}><VscSync />5↓ 0↑</StatusItem>
          <StatusItem $left={22}><VscError />0</StatusItem>
          <StatusItem $left={6}><VscWarning />2</StatusItem>
          <StatusItem $left={25}><VscRadioTower />0</StatusItem>
          <ZoomBox><VscZoomOut /></ZoomBox>
          <StatusItem $left={13}>Spaces: 4</StatusItem>
          <StatusItem $left={24}>CRLF</StatusItem>
          <StatusItem $left={24}>Cell 19 of 21</StatusItem>
          <StatusItem $left={24}><VscBell /></StatusItem>
          <StatusItem $left={25}><VscBracketDot /></StatusItem>
        </StatusBar>
      </Window>

      <TaskBar>
        <TaskSlot $w={81}><WeatherArt /><TaskBadge $right={16}>1</TaskBadge></TaskSlot>
        <TaskSlot><StartArt /></TaskSlot>
        <TaskSlot><SearchArt /></TaskSlot>
        <TaskSlot><TaskViewArt /></TaskSlot>
        <TaskSlot><TeamsArt /><TaskBadge $blue $right={8}>1</TaskBadge></TaskSlot>
        <TaskSlot><ExplorerArt /><RunPill /></TaskSlot>
        <TaskSlot><EdgeArt /></TaskSlot>
        <TaskSlot><StoreArt /></TaskSlot>
        <TaskSlot><SlackArt /><RunPill /></TaskSlot>
        <TaskSlot><McAfeeArt /></TaskSlot>
        <TaskSlot $active><VsCodeLogo size={42} /><RunPill $active /></TaskSlot>
        <TaskSlot><TerminalArt /></TaskSlot>
        <TaskSlot><ChromeArt /><RunPill /></TaskSlot>
        <TaskSlot><SnipArt /></TaskSlot>
        <TaskSlot><GitArt /><RunPill /></TaskSlot>
        <TaskSeparator />
        <TaskSlot><ZoomArt /><RunPill /></TaskSlot>
        <TaskSlot><MoreArt /></TaskSlot>
        <Tray>
          <TaskSlot $w={55}><TrayChevron /></TaskSlot>
          <TaskSlot $w={55}><CloudArt /></TaskSlot>
          <TaskSlot $w={56}><MicArt /></TaskSlot>
          <TaskSlot $w={58}><WifiArt /></TaskSlot>
          <TaskSlot $w={24}><VolumeArt /></TaskSlot>
          <TaskSlot $w={62}><BatteryArt /></TaskSlot>
          <Clock><span>7:51 PM</span><span>4/17/2024</span></Clock>
          <TaskSlot $w={42}><SnoozeArt /></TaskSlot>
          <TaskSlot $w={84}><CopilotArt /></TaskSlot>
        </Tray>
      </TaskBar>
    </Screen>
  )
}
